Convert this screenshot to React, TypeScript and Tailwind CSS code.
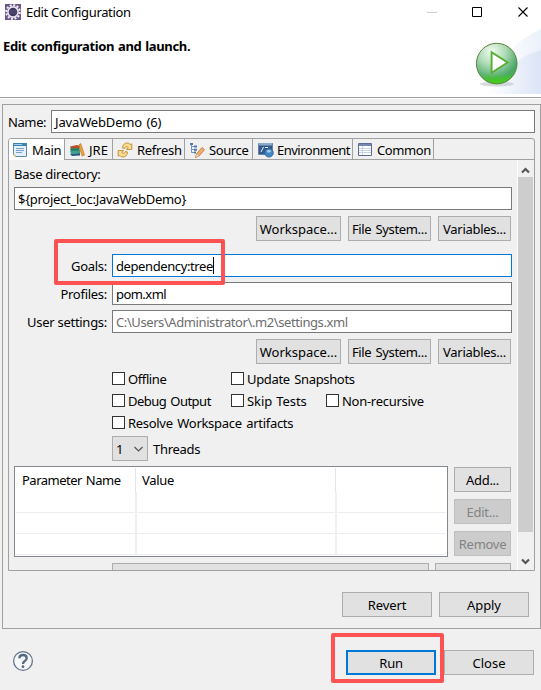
import type { ReactNode } from "react";

function Btn({ children, className = "" }: { children?: ReactNode; className?: string }) {
  return (
    <button
      type="button"
      className={`flex h-[25px] shrink-0 items-center justify-center border border-[#adadad] bg-[#e1e1e1] whitespace-nowrap ${className}`}
    >
      {children}
    </button>
  );
}

function Field({ value, className = "" }: { value: ReactNode; className?: string }) {
  return (
    <div className={`flex h-[23px] items-center border bg-white pl-[3px] whitespace-pre ${className}`}>{value}</div>
  );
}

function LabeledField({ label, children }: { label: string; children: ReactNode }) {
  return (
    <div className="flex h-[23px] items-center">
      <div className="mr-[5px] w-[93px] text-right whitespace-nowrap">{label}</div>
      {children}
    </div>
  );
}

function Check({ label, className = "" }: { label: string; className?: string }) {
  return (
    <label className={`flex h-[13px] items-center gap-[3px] whitespace-nowrap ${className}`}>
      <span className="size-[13px] shrink-0 border border-[#333] bg-white" />
      {label}
    </label>
  );
}

function PathButtons() {
  return (
    <div className="ml-[242px] flex gap-[7px]">
      <Btn className="w-[85px] tracking-normal">Workspace...</Btn>
      <Btn className="w-[83px] tracking-[-0.33px] [word-spacing:1px]">File System...</Btn>
      <Btn className="w-[73px]">Variables...</Btn>
    </div>
  );
}

function Tab({ icon, label, className }: { icon: ReactNode; label: string; className: string }) {
  return (
    <div
      className={`flex h-[21px] shrink-0 items-center border-r border-[#a0a0a0] whitespace-nowrap [&>svg]:shrink-0 ${className}`}
    >
      {icon}
      <span>{label}</span>
    </div>
  );
}

function EclipseIcon() {
  return (
    <svg width="16" height="16" viewBox="0 0 16 16">
      <rect width="16" height="16" fill="#6b5689" />
      <circle cx="8" cy="8" r="6.8" fill="none" stroke="#f2eff5" strokeWidth="2" strokeDasharray="2 1.56" />
      <circle cx="8" cy="8" r="5.1" fill="#40385f" stroke="#e8e4ec" strokeWidth="1.6" />
      <path d="M4.2 7h7.6M4.2 9h7.6" stroke="#5c5580" strokeWidth=".8" />
    </svg>
  );
}

function MainIcon() {
  return (
    <svg width="16" height="16" viewBox="0 0 16 16">
      <path d="M1.500 1.500h13v13h-11l-2-2z" fill="#e4f1fa" stroke="#5c8da4" />
      <path d="M1 1h14v3H1z" fill="#3c82ae" />
      <path d="M2 2.500h8" stroke="#9fd0eb" />
      <path d="M4 6.500h8M4 8.500h8M4 10.500h6" stroke="#7ba1cb" />
      <path d="M1 12.500h2.500V15H3z" fill="#d8b869" />
    </svg>
  );
}

function BooksIcon() {
  return (
    <svg width="16" height="16" viewBox="0 0 16 16">
      <path d="M1 4.500l7-1.500 3 1v2.500L2 7z" fill="#b5502f" />
      <path d="M1 6.500l9-.5 1 3-9 .5z" fill="#2b7b63" />
      <path d="M1 9l10-.5v2.500L2 12z" fill="#3ba58c" />
      <path d="M1 12l10-1v2.500L3 14z" fill="#2b5a80" />
      <path d="M9.800 3l2-1.500 3.700 11.500-2.500 1z" fill="#eda636" stroke="#b96a1c" strokeWidth=".6" />
    </svg>
  );
}

function RefreshIcon() {
  return (
    <svg width="16" height="16" viewBox="0 0 16 16">
      <g fill="#f9dc94" stroke="#c18a2a" strokeWidth=".9" strokeLinejoin="round">
        <path d="M5.500 6C5.500 3 7.500 1 10 1c1.500 0 2.500.6 3.200 1.500L14.800 1.800V7.500H9.500l1.700-2C9.500 4 8 4.500 7.800 6.500z" />
        <path d="M10.500 10c0 3-2 5-4.500 5-1.500 0-2.500-.6-3.200-1.500l-1.600.7V8.500h5.300l-1.700 2C6.500 12 8 11.500 8.200 9.500z" />
      </g>
    </svg>
  );
}

function SourceIcon() {
  return (
    <svg width="16" height="16" viewBox="0 0 16 16">
      <path d="M2.500 2v8.500H6M2.500 4.500H6M2.500 7.500H6" fill="none" stroke="#7b93b5" />
      <path d="M1 1h3v2H1zM5 3.500h3v2H5zM5 6.700h3v2H5zM5 9.500h2v2H5z" fill="#4f78ac" />
      <path d="M6.500 15.500l1.300-4 5.200-6 2.500 2.200-5.200 6z" fill="#f1b06a" stroke="#b66f35" strokeWidth=".8" />
      <path d="M6.500 15.500l1.300-4 2.500 2.200z" fill="#f7e1bd" stroke="#b8906a" strokeWidth=".5" />
    </svg>
  );
}

function EnvIcon() {
  return (
    <svg width="16" height="16" viewBox="0 0 16 16">
      <path d="M.500 1.500h14v11H.500z" fill="#35598a" stroke="#6683a8" />
      <path d="M1 1h13v2.500H1z" fill="#8aa9cb" />
      <path d="M3 10l2.500-5M7 5.500h3" stroke="#eef6ff" />
      <circle cx="11" cy="10.800" r="4.300" fill="#4385c3" stroke="#2d629e" strokeWidth=".8" />
      <path d="M8.500 8.800q2.500-1.800 4.800 0l-1 1.500-2.300.5z" fill="#a6d2ed" />
    </svg>
  );
}

function TableIcon() {
  return (
    <svg width="14" height="13" viewBox="0 0 14 13">
      <path d="M.500.500h13v12H.500z" fill="#fff" stroke="#5c6c96" />
      <path d="M1 1h12v2H1z" fill="#7788b4" />
      <path d="M4.500 3v9M1 5.500h12M1 7.500h12M1 9.500h12" stroke="#bcc9e2" strokeWidth=".8" />
    </svg>
  );
}

function RunBanner() {
  return (
    <svg width="74" height="68" viewBox="0 0 74 68">
      <defs>
        <linearGradient id="sweep" x1="0" x2="1">
          <stop offset=".2" stopColor="#fff" />
          <stop offset="1" stopColor="#dbe5f6" />
        </linearGradient>
        <linearGradient id="upper" x1="0" x2="1">
          <stop offset=".3" stopColor="#fff" />
          <stop offset="1" stopColor="#ebf1fb" />
        </linearGradient>
        <radialGradient id="ball" cx=".38" cy=".2" r=".85">
          <stop offset="0" stopColor="#f1faf1" />
          <stop offset=".4" stopColor="#aedbb4" />
          <stop offset=".8" stopColor="#4aa869" />
          <stop offset="1" stopColor="#43b53c" />
        </radialGradient>
        <linearGradient id="rim" x1="0" y1="0" x2="0" y2="1">
          <stop offset=".75" stopColor="#45d012" stopOpacity="0" />
          <stop offset="1" stopColor="#45d012" />
        </linearGradient>
      </defs>
      <path d="M74 3Q58 10 44 23L12 68h62z" fill="url(#upper)" />
      <path d="M74 24Q54 29 44 42L6 68h68z" fill="url(#sweep)" />
      <ellipse cx="30" cy="58" rx="17" ry="2.500" fill="#b9c4c4" opacity=".6" />
      <circle cx="29.700" cy="37.600" r="20.300" fill="url(#ball)" stroke="#5f803e" strokeWidth="1" />
      <circle cx="29.700" cy="37.600" r="19.600" fill="url(#rim)" />
      <path d="M24.600 26.300v20.400L40.600 36.500z" fill="#fff" stroke="#57ae35" strokeWidth="1.900" />
    </svg>
  );
}

function Arrow({ down = false }: { down?: boolean }) {
  return (
    <svg width="9" height="7" viewBox="0 0 9 7" className={down ? "rotate-180" : ""}>
      <path d="M1 5.500l3.500-3.500L8 5.500" fill="none" stroke="#555" strokeWidth="2.200" />
    </svg>
  );
}

export default function App() {
  return (
    <div className="relative flex h-[690px] w-[541px] flex-col overflow-hidden bg-[#f0f0f0] font-['Noto_Sans','Open_Sans',sans-serif] text-[13px] leading-[18px] tracking-[-0.28px] text-black">
      <header className="flex h-[98px] shrink-0 border-b border-[#a0a0a0] bg-white">
        <div className="flex-1">
          <div className="flex h-6 items-center gap-[5px] pl-[5px]">
            <EclipseIcon />
            <span className="tracking-[-0.35px]">Edit Configuration</span>
          </div>
          <div className="mt-[13px] pl-[3px] font-bold tracking-[-0.35px] [word-spacing:0.8px]">
            Edit configuration and launch.
          </div>
        </div>
        <div className="w-[116px]">
          <div className="flex h-[26px] items-center">
            <svg width="116" height="26" viewBox="0 0 116 26">
              <path d="M2 12.500h10" stroke="#ccc" />
              <path d="M47.500 7.500h9v9h-9z" fill="none" stroke="#000" strokeWidth="1" />
              <path d="M93.500 7.500l9 9M102.500 7.500l-9 9" stroke="#000" strokeWidth="1.100" />
            </svg>
          </div>
          <div className="flex justify-end">
            <RunBanner />
          </div>
        </div>
      </header>
      <div className="h-px shrink-0 bg-white" />

      <main className="mt-[5px] ml-[2px] flex h-[525px] w-[539px] shrink-0 flex-col border border-[#a0a0a0] pt-[5px] pl-[5px]">
        <div className="flex h-[23px] items-center">
          <div className="w-[43px] tracking-[-0.4px] whitespace-nowrap">Name:</div>
          <Field
            value="JavaWebDemo (6)"
            className="w-[484px] border-[#7a7a7a] tracking-[-0.15px] [word-spacing:1.200px]"
          />
        </div>

        <section className="mt-[5px] h-[433px] w-[527px] shrink-0 overflow-hidden rounded-t-[3px] border border-[#a0a0a0]">
          <div className="flex h-[21px] border-b border-[#a0a0a0]">
            <Tab icon={<MainIcon />} label="Main" className="w-[56px] gap-[4px] bg-white pl-[3px]" />
            <Tab icon={<BooksIcon />} label="JRE" className="w-[48px] gap-[4px] pl-[4px] tracking-normal" />
            <Tab icon={<RefreshIcon />} label="Refresh" className="w-[72px] gap-[4px] pl-[4px]" />
            <Tab icon={<SourceIcon />} label="Source" className="w-[68px] gap-[4px] pl-[4px] tracking-[-0.4px]" />
            <Tab icon={<EnvIcon />} label="Environment" className="w-[100px] gap-[3px] pl-[5px] tracking-[-0.5px]" />
            <Tab icon={<TableIcon />} label="Common" className="w-[81px] gap-[5px] pl-[5px] tracking-[-0.4px]" />
          </div>

          <div className="flex h-[410px]">
            <div className="w-[508px] overflow-hidden pl-[5px]">
              <div className="flex h-[27px] items-center">Base directory:</div>
              <Field value="${project_loc:JavaWebDemo}" className="w-[498px] border-[#7a7a7a]" />
              <div className="mt-[6px]">
                <PathButtons />
              </div>

              <div className="mt-[13px] flex flex-col gap-[5px]">
                <LabeledField label="Goals:">
                  <Field
                    value={
                      <>
                        dependency:tree
                        <span className="h-[17px] w-px bg-black" />
                      </>
                    }
                    className="w-[400px] border-[#0078d7] tracking-[-0.4px]"
                  />
                </LabeledField>
                <LabeledField label="Profiles:">
                  <Field value="pom.xml" className="w-[400px] border-[#7a7a7a] tracking-[-0.55px]" />
                </LabeledField>
                <LabeledField label="User settings:">
                  <Field
                    value="C:\Users\Administrator\.m2\settings.xml"
                    className="w-[400px] border-[#7a7a7a] tracking-[-0.41px] text-[#6d6d6d]"
                  />
                </LabeledField>
              </div>
              <div className="mt-[6px]">
                <PathButtons />
              </div>

              <div className="mt-[8px] ml-[98px] flex flex-col gap-[9px]">
                <div className="flex">
                  <Check label="Offline" className="w-[119px] tracking-[-0.4px]" />
                  <Check label="Update Snapshots" className="tracking-[-0.35px] [word-spacing:1.500px]" />
                </div>
                <div className="flex">
                  <Check label="Debug Output" className="w-[119px] tracking-[-0.5px] [word-spacing:1px]" />
                  <Check label="Skip Tests" className="w-[95px] tracking-[-0.1px] [word-spacing:1px]" />
                  <Check label="Non-recursive" />
                </div>
                <Check label="Resolve Workspace artifacts" className="tracking-[-0.3px] [word-spacing:1.500px]" />
              </div>
              <div className="mt-[7px] ml-[98px] flex items-center gap-[5px]">
                <div className="flex h-[25px] w-[36px] items-center justify-between border border-[#adadad] bg-[#e1e1e1] pr-[4px] pl-[3px]">
                  1
                  <svg width="9" height="6" viewBox="0 0 9 6">
                    <path d="M.5 1l4 4 4-4" fill="none" stroke="#555" strokeWidth="1.200" />
                  </svg>
                </div>
                <span>Threads</span>
              </div>

              <div className="mt-[5px] flex gap-[6px]">
                <div className="h-[91px] w-[434px] shrink-0 border border-[#828790] bg-white px-px pt-px">
                  <div className="flex h-[24px] items-center">
                    <div className="flex h-full w-[120px] items-center border-r border-[#e5e5e5] pb-px pl-[6px] tracking-[-0.5px] whitespace-nowrap [word-spacing:1px]">
                      Parameter Name
                    </div>
                    <div className="flex h-full w-[200px] items-center border-r border-[#e5e5e5] pb-px pl-[6px]">
                      Value
                    </div>
                  </div>
                  {[0, 1, 2].map((row) => (
                    <div key={row} className="flex h-[21px] border-b border-[#ededf0]">
                      <div className="-mb-px w-[121px] border-r-2 border-[#ecf0f6]" />
                      <div className="-mb-px w-[200px] border-r-2 border-[#f0f1f4]" />
                    </div>
                  ))}
                </div>
                <div className="mt-px flex flex-col gap-[7px]">
                  <Btn className="w-[57px]">Add...</Btn>
                  <Btn className="w-[57px] border-[#bfbfbf]! bg-[#ccc]! text-[#838383]">Edit...</Btn>
                  <Btn className="w-[57px] border-[#bfbfbf]! bg-[#ccc]! text-[#838383]">Remove</Btn>
                </div>
              </div>
              <div className="mt-[6px] ml-[98px] flex gap-[6px]">
                <Btn className="w-[317px]" />
                <Btn className="w-[76px]" />
              </div>
            </div>
            <div className="flex w-[17px] flex-col border-l border-white">
              <div className="flex h-[17px] w-[15px] items-center justify-center pt-[3px]">
                <Arrow />
              </div>
              <div className="h-[355px] w-[15px] bg-[#cdcdcd]" />
              <div className="flex w-[15px] flex-1 justify-center pt-[26px]">
                <Arrow down />
              </div>
            </div>
          </div>
        </section>

        <div className="mt-[21px] ml-[334px] flex gap-[7px]">
          <Btn className="w-[90px] tracking-[-0.1px]">Revert</Btn>
          <Btn className="w-[90px] tracking-[-0.1px]">Apply</Btn>
        </div>
      </main>

      <footer className="mt-[21px] flex h-[25px] shrink-0 items-center pl-[12px]">
        <svg width="22" height="22" viewBox="0 0 22 22" className="-mt-[3px]">
          <circle cx="11" cy="11" r="9.400" fill="#f4f6f8" stroke="#64758c" strokeWidth="1.300" />
          <path
            d="M7.300 8.200Q7.500 5 11 5t3.700 3.100Q14.700 10 12.600 11.200 11 12.200 11 14"
            fill="none"
            stroke="#526a86"
            strokeWidth="2.300"
          />
          <circle cx="11" cy="16.700" r="1.400" fill="#526a86" />
        </svg>
        <Btn className="ml-[312px] w-[90px] border-2! border-[#0078d7]!">Run</Btn>
        <Btn className="ml-[8px] w-[90px] tracking-normal">Close</Btn>
      </footer>

      <div className="pointer-events-none absolute top-[239px] left-[54px] h-[46px] w-[171px] rounded-[2px] border-4 border-[#ff5252]" />
      <div className="pointer-events-none absolute top-[633px] left-[331px] h-[50px] w-[113px] rounded-[2px] border-4 border-[#ff5252]" />
    </div>
  );
}
